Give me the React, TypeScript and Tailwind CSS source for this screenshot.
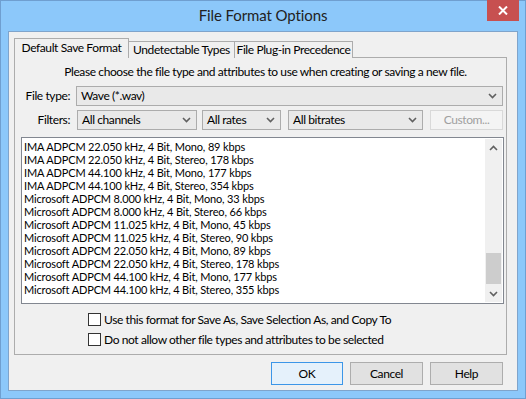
import React from "react";

const items = [
  "IMA ADPCM 22.050 kHz, 4 Bit, Mono, 89 kbps",
  "IMA ADPCM 22.050 kHz, 4 Bit, Stereo, 178 kbps",
  "IMA ADPCM 44.100 kHz, 4 Bit, Mono, 177 kbps",
  "IMA ADPCM 44.100 kHz, 4 Bit, Stereo, 354 kbps",
  "Microsoft ADPCM 8.000 kHz, 4 Bit, Mono, 33 kbps",
  "Microsoft ADPCM 8.000 kHz, 4 Bit, Stereo, 66 kbps",
  "Microsoft ADPCM 11.025 kHz, 4 Bit, Mono, 45 kbps",
  "Microsoft ADPCM 11.025 kHz, 4 Bit, Stereo, 90 kbps",
  "Microsoft ADPCM 22.050 kHz, 4 Bit, Mono, 89 kbps",
  "Microsoft ADPCM 22.050 kHz, 4 Bit, Stereo, 178 kbps",
  "Microsoft ADPCM 44.100 kHz, 4 Bit, Mono, 177 kbps",
  "Microsoft ADPCM 44.100 kHz, 4 Bit, Stereo, 355 kbps",
];

function Chevron({ up = false }: { up?: boolean }) {
  return (
    <svg width="9" height="6" viewBox="0 0 9 6" className="shrink-0">
      <polyline
        points={up ? "1,5 4.5,1.5 8,5" : "1,1 4.5,4.5 8,1"}
        fill="none"
        stroke="#606060"
        strokeWidth="1.6"
      />
    </svg>
  );
}

function Select({ label, className }: { label: string; className: string }) {
  return (
    <div
      className={`flex items-center justify-between h-[20px] border border-[#acacac] bg-[#e9e9e9] pl-[4px] pr-[5px] ${className}`}
    >
      <span className="leading-[18px] whitespace-nowrap">{label}</span>
      <Chevron />
    </div>
  );
}

function Checkbox({ label }: { label: string }) {
  return (
    <div className="flex items-center h-[13px]">
      <div className="w-[13px] h-[13px] border border-[#333333] bg-white shrink-0" />
      <span className="ml-[3px] leading-[13px] whitespace-nowrap">{label}</span>
    </div>
  );
}

export default function App() {
  return (
    <div
      className="w-[526px] h-[399px] border border-[#6f9fd0] bg-[#8cc8fa] flex flex-col text-[12px] text-black tracking-[-0.4px]"
      style={{ fontFamily: 'Lato, "Open Sans", sans-serif' }}
    >
      {/* Title bar */}
      <div className="relative h-[30px] shrink-0 flex items-center justify-center">
        <span className="text-[15px] text-[#222] tracking-[-0.1px] -mt-[1px]">File Format Options</span>
        <div className="absolute top-[-1px] right-[6px] w-[32px] h-[21px] bg-[#c75050] flex items-center justify-center">
          <svg width="10" height="9" viewBox="0 0 10 9">
            <path d="M1 0.5 L9 8.5 M9 0.5 L1 8.5" stroke="white" strokeWidth="2" />
          </svg>
        </div>
      </div>

      {/* Client area */}
      <div className="mx-[7px] mb-[7px] flex-1 bg-[#f0f0f0] border border-[#7fa4cb] flex flex-col">
        {/* Tabs */}
        <div className="flex items-end mt-[6px] ml-[5px] h-[20px] relative z-10 whitespace-nowrap">
          <div className="h-[20px] border border-b-0 border-[#acacac] bg-[#f0f0f0] leading-[18px] w-[115px] text-center">
            Default Save Format
          </div>
          <div className="h-[17px] border border-l-0 border-b-0 border-[#acacac] bg-[#f0f0f0] leading-[16px] w-[106px] text-center">
            Undetectable Types
          </div>
          <div className="h-[17px] border border-l-0 border-b-0 border-[#acacac] bg-[#f0f0f0] leading-[16px] w-[118px] text-center">
            File Plug-in Precedence
          </div>
        </div>

        {/* Tab panel */}
        <div className="ml-[5px] w-[493px] h-[298px] -mt-[1px] border border-[#acacac] flex flex-col">
          <div className="text-center mt-[6px] leading-[16px] pl-[10px] whitespace-nowrap">
            Please choose the file type and attributes to use when creating or saving a new file.
          </div>

          <div className="flex items-center mt-[6px]">
            <span className="w-[61px] text-right pr-[6px]">File type:</span>
            <Select label="Wave (*.wav)" className="w-[427px]" />
          </div>

          <div className="flex items-center mt-[4px]">
            <span className="w-[62px] text-right pr-[7px]">Filters:</span>
            <Select label="All channels" className="w-[120px]" />
            <Select label="All rates" className="w-[79px] ml-[5px]" />
            <Select label="All bitrates" className="w-[135px] ml-[7px]" />
            <div className="ml-[7px] w-[73px] h-[20px] border border-[#d9d9d9] bg-[#f4f4f4] text-[#a0a0a0] flex items-center justify-center">
              Custom...
            </div>
          </div>

          {/* List */}
          <div className="ml-[6px] mt-[7px] w-[483px] h-[167px] border border-[#828790] bg-white flex">
            <div className="flex-1 pl-[2px] pt-[2px] overflow-hidden text-[11px] tracking-[-0.15px]">
              {items.map((t) => (
                <div key={t} className="leading-[13px] h-[13px] whitespace-nowrap">
                  {t}
                </div>
              ))}
            </div>
            <div className="w-[17px] bg-[#f0f0f0] flex flex-col items-center my-[1px] mr-[1px]">
              <div className="h-[17px] flex items-center justify-center">
                <Chevron up />
              </div>
              <div className="flex-1 w-full flex flex-col justify-end">
                <div className="h-[31px] w-[15px] mx-auto bg-[#cdcdcd] mb-[1px]" />
              </div>
              <div className="h-[17px] flex items-center justify-center">
                <Chevron />
              </div>
            </div>
          </div>

          <div className="ml-[73px] mt-[9px] flex flex-col gap-[7px]">
            <Checkbox label="Use this format for Save As, Save Selection As, and Copy To" />
            <Checkbox label="Do not allow other file types and attributes to be selected" />
          </div>
        </div>

        {/* Buttons */}
        <div className="flex justify-end mt-[7px] mr-[14px] gap-[7px]">
          <div className="w-[72px] h-[23px] border border-[#3c96e8] bg-[#e5f1fb] flex items-center justify-center">OK</div>
          <div className="w-[73px] h-[23px] border border-[#adadad] bg-[#e1e1e1] flex items-center justify-center">Cancel</div>
          <div className="w-[73px] h-[23px] border border-[#adadad] bg-[#e1e1e1] flex items-center justify-center">Help</div>
        </div>
      </div>
    </div>
  );
}
